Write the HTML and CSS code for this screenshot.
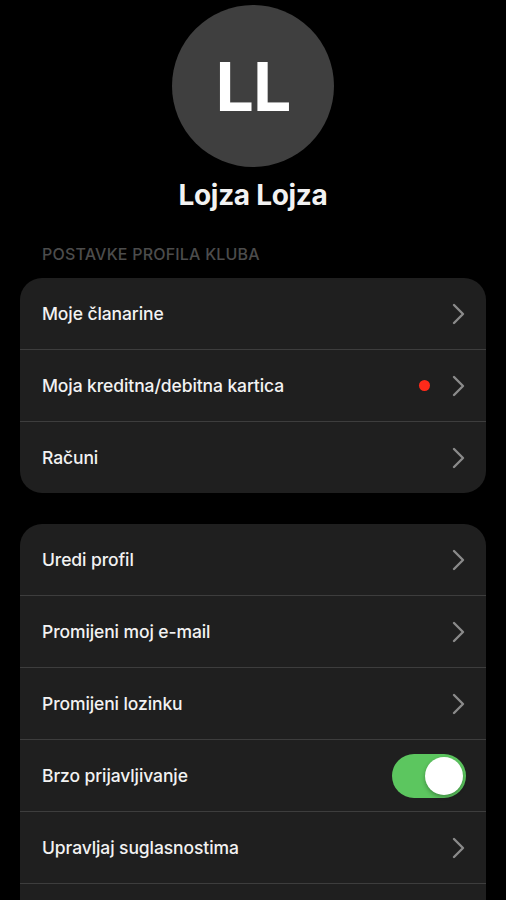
FILE: index.html
```html
<!DOCTYPE html>
<html lang="hr">
<head>
    <meta charset="UTF-8">
    <meta name="viewport" content="width=device-width, initial-scale=1.0">
    <title>Profil</title>
    <link rel="stylesheet" href="styles.css">
</head>
<body>
<div class="profile">
    <div class="avatar">LL</div>
    <h1 class="name">Lojza Lojza</h1>
</div>

<div class="section">
    <h2 class="section-title">POSTAVKE PROFILA KLUBA</h2>
    <ul class="card">
        <li class="row">
            <span class="label">Moje članarine</span>
            <svg class="chevron" viewBox="0 0 14 22"><path d="M2 2l9 9-9 9"/></svg>
        </li>
        <li class="row">
            <span class="label">Moja kreditna/debitna kartica</span>
            <span class="dot"></span>
            <svg class="chevron" viewBox="0 0 14 22"><path d="M2 2l9 9-9 9"/></svg>
        </li>
        <li class="row">
            <span class="label">Računi</span>
            <svg class="chevron" viewBox="0 0 14 22"><path d="M2 2l9 9-9 9"/></svg>
        </li>
    </ul>
</div>

<div class="section">
    <ul class="card">
        <li class="row">
            <span class="label">Uredi profil</span>
            <svg class="chevron" viewBox="0 0 14 22"><path d="M2 2l9 9-9 9"/></svg>
        </li>
        <li class="row">
            <span class="label">Promijeni moj e-mail</span>
            <svg class="chevron" viewBox="0 0 14 22"><path d="M2 2l9 9-9 9"/></svg>
        </li>
        <li class="row">
            <span class="label">Promijeni lozinku</span>
            <svg class="chevron" viewBox="0 0 14 22"><path d="M2 2l9 9-9 9"/></svg>
        </li>
        <li class="row">
            <span class="label">Brzo prijavljivanje</span>
            <span class="switch on"><span class="knob"></span></span>
        </li>
        <li class="row">
            <span class="label">Upravljaj suglasnostima</span>
            <svg class="chevron" viewBox="0 0 14 22"><path d="M2 2l9 9-9 9"/></svg>
        </li>
        <li class="row"></li>
    </ul>
</div>
</body>
</html>
```

FILE: styles.css
```css
:root {
    --bg: #000;
    --card: #1f1f1f;
    --line: #3d3d3d;
    --text: #f2f2f2;
    --muted: #4c4c4c;
    --chevron: #8a8a8a;
    --green: #5cc65f;
    --red: #ff2a1a;
}

* {
    margin: 0;
    padding: 0;
    box-sizing: border-box;
}

html, body {
    height: 100%;
    overflow: hidden;
}

body {
    background: var(--bg);
    color: var(--text);
    font-family: Inter, "Liberation Sans", sans-serif;
    padding: 0 20px;
}

.profile {
    display: flex;
    flex-direction: column;
    align-items: center;
    padding-top: 5px;
}

.avatar {
    width: 162px;
    height: 162px;
    border-radius: 50%;
    background: #3f3f3f;
    color: #fff;
    display: flex;
    align-items: center;
    justify-content: center;
    font-size: 68px;
    font-weight: 700;
    letter-spacing: -1px;
}

.name {
    margin-top: 11px;
    font-size: 28px;
    font-weight: 700;
    line-height: 34px;
    letter-spacing: -0.3px;
}

.section-title {
    margin: 33px 0 15px 22px;
    font-size: 16px;
    font-weight: 500;
    line-height: 18px;
    color: var(--muted);
    letter-spacing: 0.2px;
}

.card {
    list-style: none;
    background: var(--card);
    border-radius: 22px;
    overflow: hidden;
}

.section + .section {
    margin-top: 31px;
}

.row {
    height: 72px;
    display: flex;
    align-items: center;
    padding: 0 20px 0 22px;
    border-bottom: 1px solid var(--line);
}

.card .row:last-child {
    height: 71px;
    border-bottom: none;
}

.label {
    flex: 1;
    font-size: 17.5px;
    font-weight: 500;
    letter-spacing: -0.1px;
}

.chevron {
    width: 14px;
    height: 22px;
    fill: none;
    stroke: var(--chevron);
    stroke-width: 2.4;
    stroke-linecap: round;
    stroke-linejoin: round;
}

.dot {
    width: 11px;
    height: 11px;
    border-radius: 50%;
    background: var(--red);
    margin-right: 22px;
}

.switch {
    width: 74px;
    height: 44px;
    border-radius: 22px;
    background: var(--green);
    padding: 3px;
    display: flex;
    justify-content: flex-end;
}

.knob {
    width: 38px;
    height: 38px;
    border-radius: 50%;
    background: #fff;
    box-shadow: 0 2px 4px rgba(0, 0, 0, 0.3);
}
```
